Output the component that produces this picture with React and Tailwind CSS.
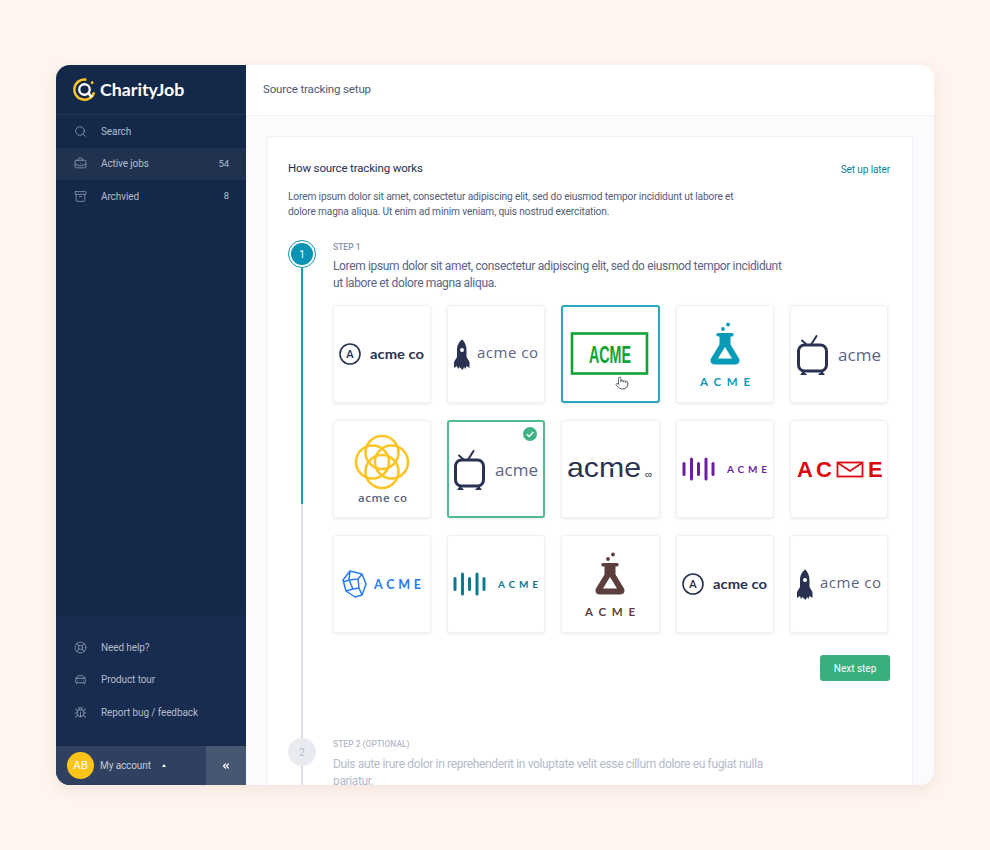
import { Search, BriefcaseBusiness, Archive, LifeBuoy, CarFront, Bug, ChevronsLeft, Pointer } from 'lucide-react'

const NAV_TOP = [
    { icon: Search, label: 'Search' },
    { icon: BriefcaseBusiness, label: 'Active jobs', count: 54, active: true },
    { icon: Archive, label: 'Archvied', count: 8 },
]

const NAV_BOTTOM = [
    { icon: LifeBuoy, label: 'Need help?' },
    { icon: CarFront, label: 'Product tour' },
    { icon: Bug, label: 'Report bug / feedback' },
]

function Logo({ children }) {
    return <svg viewBox="0 0 98 98" className="w-full h-full block">{children}</svg>
}

const AcmeCircle = () => (
    <Logo>
        <circle cx="17" cy="49" r="10" fill="none" stroke="#2a3252" strokeWidth="1.600" />
        <text x="17" y="53" textAnchor="middle" fontFamily="Lato, sans-serif" fontWeight="700" fontSize="10.500" fill="#2a3252">A</text>
        <text x="37" y="53.500" fontFamily="Lato, sans-serif" fontWeight="700" fontSize="14" textLength="54" lengthAdjust="spacingAndGlyphs" fill="#2a3252">acme co</text>
    </Logo>
)

const AcmeRocket = () => (
    <Logo>
        <path d="M15 34c3 3 4.500 7 4.500 11v7l3 5v6l-3-2-1 3-1.500-2-1 2.500h-1L12.500 62l-1.500 2-1-3-3 2v-6l3-5v-7c0-4 1.500-8 5.500-11z" fill="#2a3252" />
        <circle cx="15" cy="45" r="2" fill="#fff" />
        <text x="30" y="53" fontFamily="'Open Sans', sans-serif" fontWeight="500" fontSize="15" textLength="61" fill="#5b6485">acme co</text>
    </Logo>
)

const AcmeStamp = () => (
    <Logo>
        <rect x="11" y="28.500" width="75" height="40" fill="none" stroke="#0aa535" strokeWidth="2.600" />
        <text x="28" y="57.500" fontFamily="'Liberation Sans', sans-serif" fontWeight="700" fontSize="23" textLength="42" lengthAdjust="spacingAndGlyphs" fill="#0aa535">ACME</text>
    </Logo>
)

const Flask = ({ color }) => (
    <>
        <circle cx="47" cy="24" r="1.900" fill={color} />
        <circle cx="52" cy="19.500" r="1.900" fill={color} />
        <path fillRule="evenodd" d="M42 28h14a1.500 1.500 0 0 1 0 3.500h-1.500v8l8.500 14c1.500 3-.5 6-3.500 6H38.500c-3 0-5-3-3.500-6l8.500-14v-8H42a1.500 1.500 0 0 1 0-3.500zM49 42l-7 11.500h14z" fill={color} />
    </>
)

const AcmeFlask = ({ color }) => (
    <Logo>
        <Flask color={color} />
        <text x="24" y="81" fontFamily="Lato, sans-serif" fontWeight="700" fontSize="11.500" textLength="50" fill={color}>ACME</text>
    </Logo>
)

const AcmeTv = () => (
    <Logo>
        <rect x="8.500" y="40" width="28" height="26" rx="6" fill="none" stroke="#2a3252" strokeWidth="3" />
        <path d="M16 39l-4-3.500M21.500 39l5-8" stroke="#2a3252" strokeWidth="2" fill="none" strokeLinecap="round" />
        <path d="M13 67l-2 2.500h5zM32 67l2 2.500h-5z" stroke="#2a3252" strokeWidth="1.200" fill="#2a3252" strokeLinejoin="round" />
        <text x="48" y="56" fontFamily="'Open Sans', sans-serif" fontWeight="500" fontSize="17" textLength="43" fill="#5b6485">acme</text>
    </Logo>
)

const AcmeRings = () => (
    <Logo>
        <g fill="none" stroke="#fcc425" strokeWidth="2.600">
            <circle cx="49" cy="32.500" r="16.500" />
            <circle cx="49" cy="51.500" r="16.500" />
            <circle cx="39.500" cy="42" r="16.500" />
            <circle cx="58.500" cy="42" r="16.500" />
        </g>
        <text x="25" y="82" fontFamily="'Open Sans', sans-serif" fontWeight="600" fontSize="11.500" textLength="49" fill="#5b6485">acme co</text>
    </Logo>
)

const AcmeStencil = () => (
    <Logo>
        <text x="6" y="57" fontFamily="'Liberation Sans', sans-serif" fontSize="28" textLength="74" lengthAdjust="spacingAndGlyphs" fill="#2a3252">acme</text>
        {[12, 30, 48, 66].map((x) => (
            <rect key={x} x={x} y="47" width="6" height="1.200" fill="#fff" />
        ))}
        <text x="84" y="57" fontFamily="Lato, sans-serif" fontWeight="700" fontSize="6.500" fill="#2a3252">co</text>
    </Logo>
)

const AcmeBars = ({ color }) => (
    <Logo>
        {[[8, 14], [15.500, 23], [22.500, 14], [30, 23], [37, 14]].map(([x, h]) => (
            <rect key={x} x={x - 1.500} y={49 - h / 2} width="3" height={h} rx="1.500" fill={color} />
        ))}
        <text x="51" y="53" fontFamily="Lato, sans-serif" fontWeight="700" fontSize="10" textLength="40" fill={color}>ACME</text>
    </Logo>
)

const AcmeMail = () => (
    <Logo>
        <text x="7" y="57" fontFamily="'Liberation Sans', sans-serif" fontWeight="700" fontSize="22" textLength="35" fill="#d9090f">AC</text>
        <rect x="47.500" y="42.500" width="25" height="14" fill="none" stroke="#d9090f" strokeWidth="1.800" />
        <path d="M48 43l12 8 12-8" fill="none" stroke="#d9090f" strokeWidth="1.800" />
        <text x="78" y="57" fontFamily="'Liberation Sans', sans-serif" fontWeight="700" fontSize="22" fill="#d9090f">E</text>
    </Logo>
)

const AcmeGem = () => (
    <Logo>
        <g fill="none" stroke="#2a7af0" strokeWidth="1.500" strokeLinejoin="round">
            <path d="M17 36l12 3 4 10-4 11-7 2-9-6-3-11z" />
            <path d="M17 36l-1 9 9-1 4-5M16 45l-6 2M16 45l4 9 6-1-1-9M20 54l-7 2M26 53l3 7" />
        </g>
        <text x="41" y="54" fontFamily="Lato, sans-serif" fontWeight="700" fontSize="12.500" textLength="47" fill="#2a7af0">ACME</text>
    </Logo>
)

const LOGOS = [
    <AcmeCircle />,
    <AcmeRocket />,
    <AcmeStamp />,
    <AcmeFlask color="#0a9bb8" />,
    <AcmeTv />,
    <AcmeRings />,
    <AcmeTv />,
    <AcmeStencil />,
    <AcmeBars color="#6a1fa0" />,
    <AcmeMail />,
    <AcmeGem />,
    <AcmeBars color="#0a7a8f" />,
    <AcmeFlask color="#5c3f3c" />,
    <AcmeCircle />,
    <AcmeRocket />,
]

function NavItem({ icon: Icon, label, count, active }) {
    return (
        <div className={`h-[32.5px] flex items-center pl-[18px] pr-[17px] text-[10px] tracking-[-0.1px] text-[#b4bccb] ${active ? 'bg-[#20324f]' : ''}`}>
            <Icon size={13} strokeWidth={1.300} className="text-[#a6aebf] mr-[14px] shrink-0" />
            <span className="flex-1">{label}</span>
            {count && <span className="text-[9.500px]">{count}</span>}
        </div>
    )
}

function Sidebar() {
    return (
        <aside className="w-[190px] shrink-0 flex flex-col bg-[#14284a]">
            <div className="h-[50px] flex items-center pl-[17px] gap-[4px] border-b border-[#223555]">
                <svg viewBox="0 0 24 24" className="w-[23px] h-[23px]">
                    <path d="M14 1.800A10.500 10.500 0 1 0 22 15" fill="none" stroke="#fcc425" strokeWidth="2.600" />
                    <circle cx="12" cy="12" r="5.500" fill="none" stroke="#fff" strokeWidth="2.400" />
                    <path d="M15 15l5 5" stroke="#fff" strokeWidth="2.600" />
                    <circle cx="20" cy="5" r="1.500" fill="#fcc425" />
                </svg>
                <span className="font-['Lato'] font-bold text-[17.800px] leading-none text-white">CharityJob</span>
            </div>
            <nav>
                {NAV_TOP.map((n) => <NavItem key={n.label} {...n} />)}
            </nav>
            <div className="mt-auto h-[130px] pt-[16px] bg-[#182c4f]">
                {NAV_BOTTOM.map((n) => <NavItem key={n.label} {...n} />)}
            </div>
            <div className="h-[40px] flex bg-[#2f4060] border-t border-[#14284a]">
                <div className="flex-1 flex items-center pl-[11px]">
                    <div className="w-[27px] h-[27px] rounded-full bg-[#fcc419] flex items-center justify-center text-white text-[11.500px] mr-[6px]">AB</div>
                    <span className="text-[10px] tracking-[-0.1px] text-[#c3c9d6]">My account</span>
                    <span className="ml-[11px] w-0 h-0 border-x-[2.500px] border-x-transparent border-b-[3px] border-b-white" />
                </div>
                <div className="w-[40px] bg-[#475671] flex items-center justify-center">
                    <ChevronsLeft size={10} strokeWidth={3} className="text-white" />
                </div>
            </div>
        </aside>
    )
}

function LogoCard({ logo, state }) {
    const border = state === 'hover' ? 'border-2 border-[#2ba6c6]' : state === 'selected' ? 'border-2 border-[#4fbb8f]' : 'border border-[#f1f2f6]'
    return (
        <div className={`relative h-[98px] rounded-[3px] bg-white shadow-[0_1px_3px_rgba(30,40,80,0.10)] box-border overflow-hidden ${border}`}>
            <div className={state ? '-m-[2px] w-[98px] h-[98px]' : '-m-px w-[98px] h-[98px]'}>{logo}</div>
            {state === 'selected' && (
                <span className="absolute top-[5px] right-[6px] w-[14px] h-[14px] rounded-full bg-[#3fb384] flex items-center justify-center">
                    <svg viewBox="0 0 14 14" className="w-[14px] h-[14px]"><path d="M3.800 7.200l2.300 2.200 4.200-4.400" fill="none" stroke="#fff" strokeWidth="1.400" /></svg>
                </span>
            )}
            {state === 'hover' && (
                <Pointer size={14} strokeWidth={1.300} fill="#fff" className="absolute left-[52px] top-[69px] text-[#333a4d]" />
            )}
        </div>
    )
}

function StepCircle({ n, active }) {
    if (active) {
        return (
            <div className="w-[28px] h-[28px] rounded-full border-[1.500px] border-[#0a93b5] p-[2px] shrink-0">
                <div className="w-full h-full rounded-full bg-[#0a93b5] flex items-center justify-center text-white text-[10px]">{n}</div>
            </div>
        )
    }
    return <div className="w-[28px] h-[28px] rounded-full bg-[#e9ebf0] flex items-center justify-center text-[#b5bbca] text-[10px] shrink-0">{n}</div>
}

export default function App() {
    return (
        <div className="h-[850px] w-[990px] overflow-hidden bg-[#fff5ee] pt-[65px] pl-[56px] font-['Roboto',sans-serif]">
            <div className="w-[878px] h-[720px] rounded-[14px] overflow-hidden flex bg-[#fbfbfe] shadow-[0_4px_14px_rgba(120,90,70,0.10)]">
                <Sidebar />
                <main className="flex-1 min-w-0 flex flex-col">
                    <header className="h-[51px] shrink-0 bg-white border-b border-[#eef0f4] flex items-center pl-[17px] text-[11.500px] tracking-[-0.15px] text-[#4f5874]">
                        Source tracking setup
                    </header>
                    <div className="flex-1 min-h-0 pt-[20px] pl-[21px] pr-[21px]">
                        <div className="bg-white border border-[#eef0f4] rounded-t-[3px] h-[700px] pt-[25px] pl-[20px] pr-[22px]">
                            <div className="flex items-center justify-between h-[14px]">
                                <h1 className="text-[11.500px] tracking-[-0.16px] text-[#22304f]">How source tracking works</h1>
                                <a className="mt-px text-[10px] tracking-[-0.1px] text-[#0b7f9a]">Set up later</a>
                            </div>
                            <p className="mt-[13px] text-[10.200px] tracking-[-0.15px] leading-[15px] text-[#535c7a]">
                                Lorem ipsum dolor sit amet, consectetur adipiscing elit, sed do eiusmod tempor incididunt ut labore et<br />
                                dolore magna aliqua. Ut enim ad minim veniam, quis nostrud exercitation.
                            </p>
                            <div className="mt-[21px] flex gap-[17px]">
                                <div className="w-[28px] flex flex-col items-center shrink-0">
                                    <StepCircle n={1} active />
                                    <div className="w-[2px] h-[236px] bg-[#1a9cbb] shrink-0" />
                                    <div className="w-[2px] h-[234px] bg-[#dde0e8] shrink-0" />
                                    <StepCircle n={2} />
                                    <div className="w-[2px] h-[40px] bg-[#dde0e8] shrink-0" />
                                </div>
                                <div className="flex-1 min-w-0">
                                    <div className="pt-px text-[8.500px] leading-[12px] font-medium text-[#8b93a8]">STEP 1</div>
                                    <p className="mt-[5px] text-[12px] tracking-[-0.35px] leading-[17px] text-[#5b6485]">
                                        Lorem ipsum dolor sit amet, consectetur adipiscing elit, sed do eiusmod tempor incididunt<br />
                                        ut labore et dolore magna aliqua.
                                    </p>
                                    <div className="mt-[13px] w-[555px] grid grid-cols-5 gap-[17px_16px]">
                                        {LOGOS.map((logo, i) => (
                                            <LogoCard key={i} logo={logo} state={i === 2 ? 'hover' : i === 6 ? 'selected' : undefined} />
                                        ))}
                                    </div>
                                    <div className="mt-[22px] flex justify-end">
                                        <button className="w-[70px] h-[26px] rounded-[3px] bg-[#37b07d] text-white text-[10px]">Next step</button>
                                    </div>
                                    <div className="mt-[57px] text-[8.500px] leading-[12px] font-medium text-[#b5bbca]">STEP 2 (OPTIONAL)</div>
                                    <p className="mt-[6px] text-[12px] tracking-[-0.35px] leading-[17px] text-[#b5bbca]">
                                        Duis aute irure dolor in reprehenderit in voluptate velit esse cillum dolore eu fugiat nulla<br />
                                        pariatur.
                                    </p>
                                </div>
                            </div>
                        </div>
                    </div>
                </main>
            </div>
        </div>
    )
}
